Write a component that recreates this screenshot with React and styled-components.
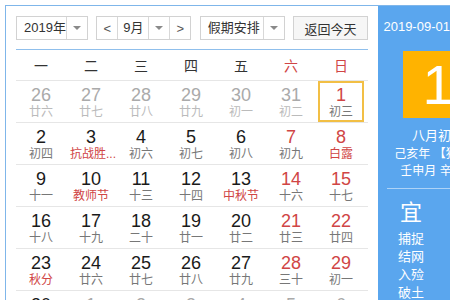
import styled, { createGlobalStyle } from 'styled-components';

const GlobalStyle = createGlobalStyle`
  html, body {
    margin: 0;
    padding: 0;
    overflow: hidden;
    background: #fff;
    font-family: "Liberation Sans", "Noto Sans CJK SC", sans-serif;
  }
`;

const RED = '#d04545';

const Widget = styled.div`
  display: flex;
  align-items: stretch;
  margin: 5px 0 0 5px;
  width: 600px;
  border: 1px solid #7fb6ea;
`;

const Main = styled.div`
  width: 352px;
  flex-shrink: 0;
  padding: 10px 10px 0 10px;
`;

const Toolbar = styled.div`
  display: flex;
  justify-content: space-between;
  align-items: center;
  padding-bottom: 9px;
  border-bottom: 1px solid #8fbfec;
`;

const Box = styled.div`
  display: flex;
  height: 24px;
  box-sizing: border-box;
  width: ${(p) => p.$w}px;
  border: 1px solid #d2d2d2;
  background: #fff;
  font-size: 13px;
  color: #333;
`;

const Label = styled.div`
  flex: 1;
  display: flex;
  align-items: center;
  justify-content: ${(p) => (p.$center ? 'center' : 'flex-start')};
  padding-left: ${(p) => (p.$center ? 0 : 7)}px;
  line-height: 22px;
  white-space: nowrap;
  overflow: hidden;
`;

const Arrow = styled.div`
  width: 20px;
  flex-shrink: 0;
  border-left: 1px solid #d8d8d8;
  display: flex;
  align-items: center;
  justify-content: center;
  &::after {
    content: '';
    border-left: 4px solid transparent;
    border-right: 4px solid transparent;
    border-top: 4px solid #8a8a8a;
  }
`;

const Nav = styled.div`
  width: 20px;
  flex-shrink: 0;
  display: flex;
  align-items: center;
  justify-content: center;
  border-left: ${(p) => (p.$sep ? '1px solid #d8d8d8' : 'none')};
  border-right: ${(p) => (p.$sepRight ? '1px solid #d8d8d8' : 'none')};
  color: #555;
  font-size: 13px;
`;

const TodayButton = styled.div`
  width: 75px;
  height: 24px;
  box-sizing: border-box;
  border: 1px solid #d2d2d2;
  background: #f6f6f6;
  font-size: 13px;
  color: #333;
  display: flex;
  align-items: center;
  justify-content: center;
  white-space: nowrap;
`;

const WeekHead = styled.div`
  display: grid;
  grid-template-columns: repeat(7, 50px);
  height: 30px;
  border-bottom: 1px solid #e6e6e6;
`;

const WeekDay = styled.div`
  display: flex;
  align-items: center;
  justify-content: center;
  font-size: 14px;
  color: ${(p) => (p.$weekend ? RED : '#333')};
`;

const Row = styled.div`
  display: grid;
  grid-template-columns: repeat(7, 50px);
  border-bottom: 1px solid #e6e6e6;
`;

const Cell = styled.div`
  height: 41px;
  box-sizing: border-box;
  margin: 0 2px;
  padding-top: 3px;
  border: 2px solid ${(p) => (p.$selected ? '#f2bf45' : 'transparent')};
  text-align: center;
`;

const Num = styled.div`
  font-size: 18px;
  line-height: 18px;
  color: ${(p) => (p.$faded ? '#aaa' : p.$red ? RED : '#1a1a1a')};
`;

const Lunar = styled.div`
  font-size: 12px;
  line-height: 16px;
  white-space: nowrap;
  color: ${(p) => (p.$fest ? RED : p.$faded ? '#bbb' : '#777')};
`;

const Side = styled.div`
  width: 120px;
  flex-shrink: 0;
  background: #5aa6ee;
  color: #fff;
  text-align: center;
  padding-top: 13px;
`;

const DateLine = styled.div`
  font-size: 13px;
  line-height: 16px;
  white-space: nowrap;
`;

const DayBox = styled.div`
  width: 70px;
  height: 67px;
  margin: 16px auto 0;
  background: #ffb300;
  font-size: 56px;
  line-height: 67px;
`;

const InfoLine = styled.div`
  font-size: ${(p) => p.$size || 12}px;
  line-height: 17px;
  margin-top: ${(p) => p.$mt || 0}px;
  white-space: nowrap;
`;

const Divider = styled.div`
  margin: 8px 9px 0;
  border-top: 1px solid rgba(255, 255, 255, 0.5);
`;

const YiJi = styled.div`
  display: flex;
  gap: 14px;
  padding: 0 9px;
`;

const YiCol = styled.div`
  width: 48px;
  flex-shrink: 0;
  display: flex;
  flex-direction: column;
  align-items: center;
`;

const YiTitle = styled.div`
  font-size: 22px;
  line-height: 26px;
  margin: 11px 0 4px;
`;

const YiItem = styled.div`
  font-size: 13px;
  line-height: 18px;
`;

const weeks = ['一', '二', '三', '四', '五', '六', '日'];

const rows = [
  [
    ['26', '廿六', 'f'], ['27', '廿七', 'f'], ['28', '廿八', 'f'], ['29', '廿九', 'f'],
    ['30', '初一', 'f'], ['31', '初二', 'f'], ['1', '初三', 'sel'],
  ],
  [
    ['2', '初四'], ['3', '抗战胜...', 'fest'], ['4', '初六'], ['5', '初七'],
    ['6', '初八'], ['7', '初九'], ['8', '白露', 'fest'],
  ],
  [
    ['9', '十一'], ['10', '教师节', 'fest'], ['11', '十三'], ['12', '十四'],
    ['13', '中秋节', 'fest'], ['14', '十六'], ['15', '十七'],
  ],
  [
    ['16', '十八'], ['17', '十九'], ['18', '二十'], ['19', '廿一'],
    ['20', '廿二'], ['21', '廿三'], ['22', '廿四'],
  ],
  [
    ['23', '秋分', 'fest'], ['24', '廿六'], ['25', '廿七'], ['26', '廿八'],
    ['27', '廿九'], ['28', '三十'], ['29', '初一'],
  ],
  [
    ['30', '初二'], ['1', '国庆节', 'f'], ['2', '初四', 'f'], ['3', '初五', 'f'],
    ['4', '初六', 'f'], ['5', '初七', 'f'], ['6', '初八', 'f'],
  ],
];

const App = () => {
  return (
    <>
      <GlobalStyle />
      <Widget>
        <Main>
          <Toolbar>
            <Box $w={72}>
              <Label>2019年</Label>
              <Arrow />
            </Box>
            <Box $w={95}>
              <Nav $sepRight>&lt;</Nav>
              <Label $center>9月</Label>
              <Arrow />
              <Nav $sep>&gt;</Nav>
            </Box>
            <Box $w={85}>
              <Label>假期安排</Label>
              <Arrow />
            </Box>
            <TodayButton>返回今天</TodayButton>
          </Toolbar>

          <WeekHead>
            {weeks.map((w, i) => (
              <WeekDay key={w} $weekend={i > 4}>{w}</WeekDay>
            ))}
          </WeekHead>

          {rows.map((row, ri) => (
            <Row key={ri}>
              {row.map(([n, l, kind], ci) => {
                const faded = kind === 'f';
                return (
                  <Cell key={ci} $selected={kind === 'sel'}>
                    <Num $faded={faded} $red={ci > 4}>{n}</Num>
                    <Lunar $faded={faded} $fest={kind === 'fest'}>{l}</Lunar>
                  </Cell>
                );
              })}
            </Row>
          ))}
        </Main>

        <Side>
          <DateLine>2019-09-01 星期日</DateLine>
          <DayBox>1</DayBox>
          <InfoLine $size={13} $mt={9}>八月初三</InfoLine>
          <InfoLine $mt={2}>己亥年 【猪年】</InfoLine>
          <InfoLine>壬申月 辛巳日</InfoLine>
          <Divider />
          <YiJi>
            <YiCol>
              <YiTitle>宜</YiTitle>
              <YiItem>捕捉</YiItem>
              <YiItem>结网</YiItem>
              <YiItem>入殓</YiItem>
              <YiItem>破土</YiItem>
              <YiItem>安葬</YiItem>
            </YiCol>
            <YiCol>
              <YiTitle>忌</YiTitle>
              <YiItem>嫁娶</YiItem>
              <YiItem>开市</YiItem>
              <YiItem>动土</YiItem>
              <YiItem>祈福</YiItem>
            </YiCol>
          </YiJi>
        </Side>
      </Widget>
    </>
  );
};

export default App;
